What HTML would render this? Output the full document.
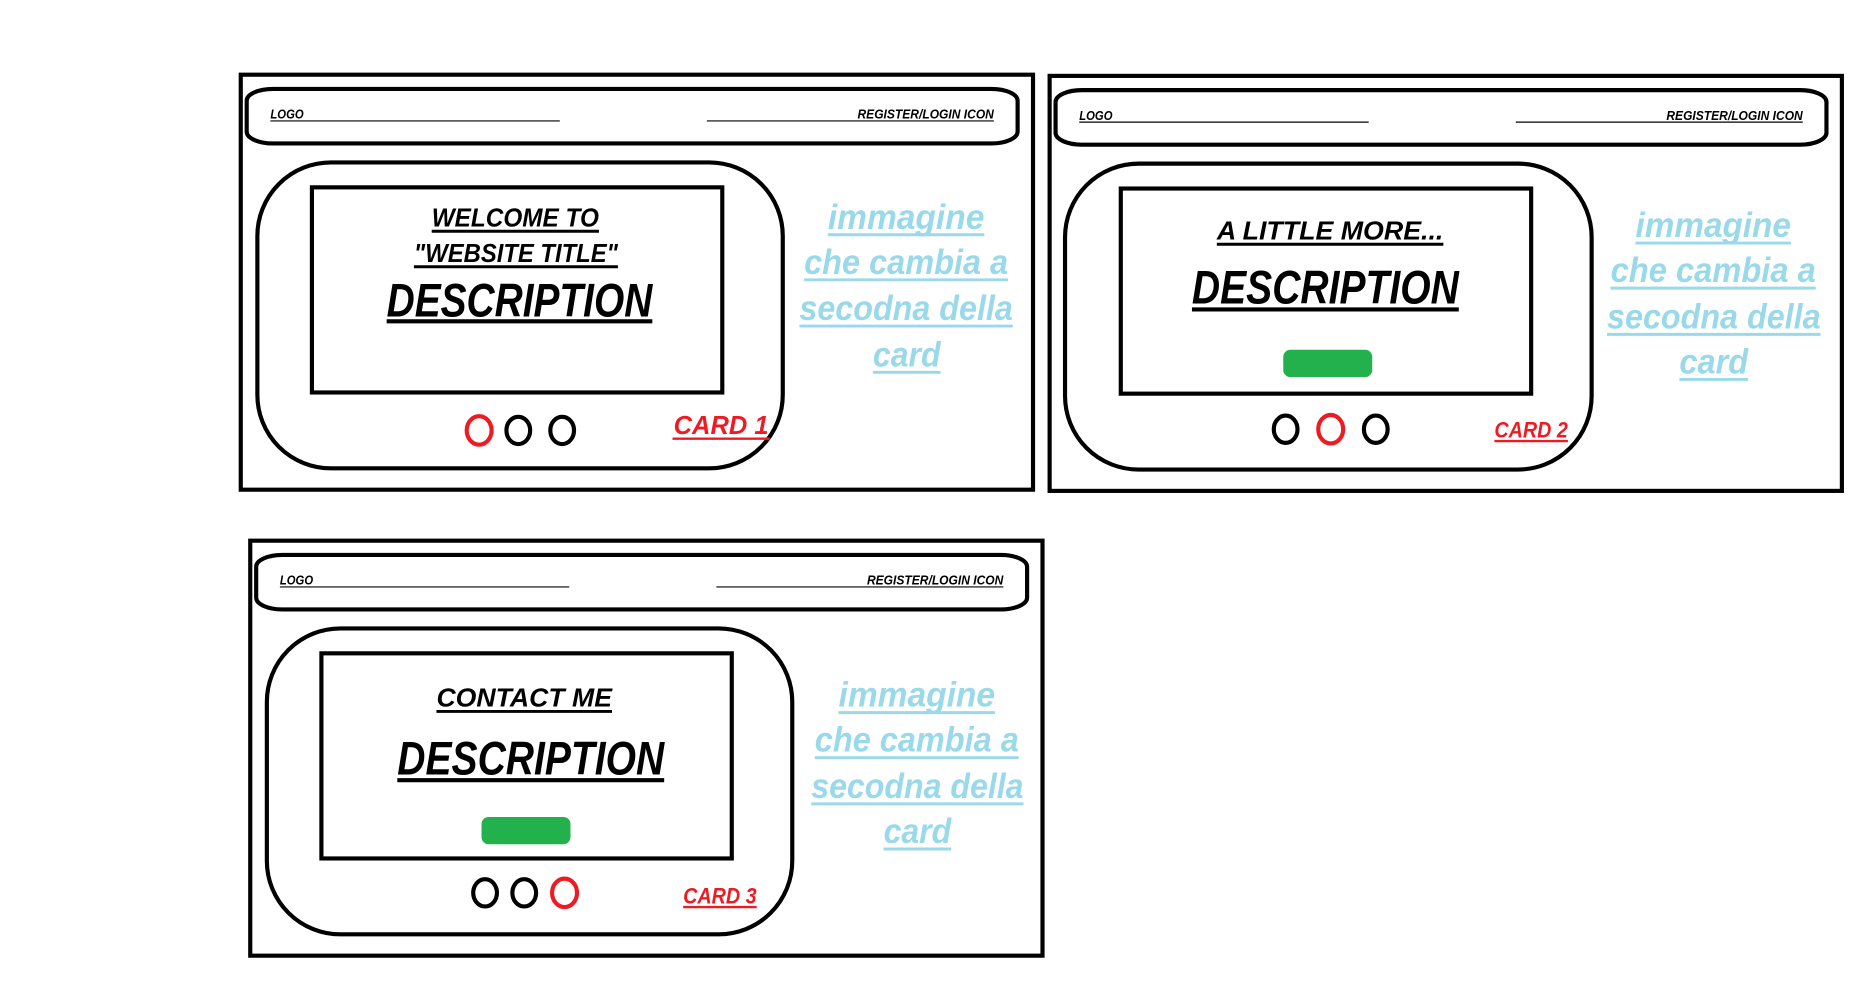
<!DOCTYPE html>
<html><head><meta charset="utf-8"><style>
html,body{margin:0;padding:0;background:#fff;width:1849px;height:996px;overflow:hidden}
svg{display:block}
text{font-family:"Liberation Sans",sans-serif;font-weight:bold;font-style:italic}
.k{fill:#000}.r{fill:#ed1c24}.b{fill:#99d9ea}
</style></head><body>
<svg width="1849" height="996" viewBox="0 0 1559 840" preserveAspectRatio="none" xmlns="http://www.w3.org/2000/svg">
<g fill="none" stroke="#000" stroke-width="3.5">
<!-- frame 1 -->
<rect x="203" y="63" width="668" height="350"/>
<rect x="208" y="75" width="650" height="46" rx="22" ry="10"/>
<rect x="217" y="137" width="443" height="258" rx="62"/>
<rect x="263" y="158" width="346" height="173"/>
<!-- frame 2 -->
<rect x="885" y="64" width="668" height="350"/>
<rect x="890" y="76" width="650" height="46" rx="22" ry="10"/>
<rect x="898" y="138" width="444" height="258" rx="62"/>
<rect x="945" y="159" width="346" height="173"/>
<!-- frame 3 -->
<rect x="211" y="456" width="668" height="350"/>
<rect x="216" y="468" width="650" height="46" rx="22" ry="10"/>
<rect x="225" y="530" width="443" height="258" rx="62"/>
<rect x="271" y="551" width="346" height="173"/>
</g>
<!-- thin header lines -->
<g stroke="#000" stroke-width="1">
<line x1="228" y1="102" x2="472" y2="102"/><line x1="596" y1="102" x2="838" y2="102"/>
<line x1="910" y1="103" x2="1154" y2="103"/><line x1="1278" y1="103" x2="1520" y2="103"/>
<line x1="236" y1="495" x2="480" y2="495"/><line x1="604" y1="495" x2="846" y2="495"/>
</g>
<g font-size="11" class="k">
<text x="228" y="100" textLength="28" lengthAdjust="spacingAndGlyphs" class="k">LOGO</text>
<text x="723" y="100" textLength="115" lengthAdjust="spacingAndGlyphs" class="k">REGISTER/LOGIN ICON</text>
<text x="910" y="101" textLength="28" lengthAdjust="spacingAndGlyphs" class="k">LOGO</text>
<text x="1405" y="101" textLength="115" lengthAdjust="spacingAndGlyphs" class="k">REGISTER/LOGIN ICON</text>
<text x="236" y="493" textLength="28" lengthAdjust="spacingAndGlyphs" class="k">LOGO</text>
<text x="731" y="493" textLength="115" lengthAdjust="spacingAndGlyphs" class="k">REGISTER/LOGIN ICON</text>
</g>
<!-- black titles -->
<text x="364" y="191" font-size="22" textLength="141" lengthAdjust="spacingAndGlyphs" class="k">WELCOME TO</text>
<text x="349" y="221" font-size="22" textLength="172" lengthAdjust="spacingAndGlyphs" class="k">"WEBSITE TITLE"</text>
<text x="326" y="267" font-size="40" textLength="224" lengthAdjust="spacingAndGlyphs" class="k">DESCRIPTION</text>
<text x="1026" y="202" font-size="22" textLength="191" lengthAdjust="spacingAndGlyphs" class="k">A LITTLE MORE...</text>
<text x="1005" y="256" font-size="40" textLength="225" lengthAdjust="spacingAndGlyphs" class="k">DESCRIPTION</text>
<text x="368" y="596" font-size="22" textLength="148" lengthAdjust="spacingAndGlyphs" class="k">CONTACT ME</text>
<text x="335" y="653" font-size="40" textLength="225" lengthAdjust="spacingAndGlyphs" class="k">DESCRIPTION</text>
<g stroke="#000">
<line x1="364" y1="195" x2="505" y2="195" stroke-width="2.5"/>
<line x1="349" y1="225" x2="521" y2="225" stroke-width="2.5"/>
<line x1="326" y1="271" x2="550" y2="271" stroke-width="3.5"/>
<line x1="1026" y1="206" x2="1217" y2="206" stroke-width="2.5"/>
<line x1="1005" y1="261" x2="1230" y2="261" stroke-width="3.5"/>
<line x1="368" y1="600" x2="516" y2="600" stroke-width="2.5"/>
<line x1="335" y1="658" x2="560" y2="658" stroke-width="3.5"/>
</g>
<!-- green buttons -->
<rect x="1082" y="295" width="75" height="23" rx="6" fill="#22b14c"/>
<rect x="406" y="689" width="75" height="23" rx="6" fill="#22b14c"/>
<!-- dots -->
<g fill="none" stroke-width="3.5">
<ellipse cx="404" cy="363" rx="10.5" ry="12" stroke="#ed1c24"/>
<ellipse cx="437" cy="363" rx="10" ry="11.5" stroke="#000"/>
<ellipse cx="474" cy="363" rx="10" ry="11.5" stroke="#000"/>
<ellipse cx="1084" cy="362" rx="10" ry="11.5" stroke="#000"/>
<ellipse cx="1122" cy="362" rx="10.5" ry="12" stroke="#ed1c24"/>
<ellipse cx="1160" cy="362" rx="10" ry="11.5" stroke="#000"/>
<ellipse cx="409" cy="753" rx="10" ry="11.5" stroke="#000"/>
<ellipse cx="442" cy="753" rx="10" ry="11.5" stroke="#000"/>
<ellipse cx="476" cy="753" rx="10.5" ry="12" stroke="#ed1c24"/>
</g>
<!-- card labels -->
<text x="568" y="366" font-size="22" textLength="80" lengthAdjust="spacingAndGlyphs" class="r">CARD  1</text>
<text x="1260" y="369" font-size="19" textLength="62" lengthAdjust="spacingAndGlyphs" class="r">CARD 2</text>
<text x="576" y="762" font-size="19" textLength="62" lengthAdjust="spacingAndGlyphs" class="r">CARD 3</text>
<g stroke="#ed1c24" stroke-width="2">
<line x1="567" y1="370" x2="649" y2="370"/>
<line x1="1260" y1="372" x2="1322" y2="372"/>
<line x1="576" y1="765" x2="638" y2="765"/>
</g>
<!-- blue text -->
<g font-size="30" class="b">
<text x="698" y="193" textLength="132" lengthAdjust="spacingAndGlyphs" class="b">immagine</text>
<text x="678" y="231" textLength="172" lengthAdjust="spacingAndGlyphs" class="b">che cambia a</text>
<text x="674" y="270" textLength="180" lengthAdjust="spacingAndGlyphs" class="b">secodna della</text>
<text x="736" y="309" textLength="57" lengthAdjust="spacingAndGlyphs" class="b">card</text>
<text x="1379" y="200" textLength="131" lengthAdjust="spacingAndGlyphs" class="b">immagine</text>
<text x="1358" y="238" textLength="173" lengthAdjust="spacingAndGlyphs" class="b">che cambia a</text>
<text x="1355" y="277" textLength="180" lengthAdjust="spacingAndGlyphs" class="b">secodna della</text>
<text x="1416" y="315" textLength="58" lengthAdjust="spacingAndGlyphs" class="b">card</text>
<text x="707" y="596" textLength="132" lengthAdjust="spacingAndGlyphs" class="b">immagine</text>
<text x="687" y="634" textLength="172" lengthAdjust="spacingAndGlyphs" class="b">che cambia a</text>
<text x="684" y="673" textLength="179" lengthAdjust="spacingAndGlyphs" class="b">secodna della</text>
<text x="745" y="711" textLength="57" lengthAdjust="spacingAndGlyphs" class="b">card</text>
</g>
<g stroke="#99d9ea" stroke-width="2.5">
<line x1="698" y1="198" x2="830" y2="198"/><line x1="678" y1="236" x2="850" y2="236"/>
<line x1="674" y1="275" x2="854" y2="275"/><line x1="736" y1="314" x2="793" y2="314"/>
<line x1="1379" y1="205" x2="1510" y2="205"/><line x1="1358" y1="243" x2="1531" y2="243"/>
<line x1="1355" y1="282" x2="1535" y2="282"/><line x1="1416" y1="320" x2="1474" y2="320"/>
<line x1="707" y1="601" x2="839" y2="601"/><line x1="687" y1="639" x2="859" y2="639"/>
<line x1="684" y1="678" x2="863" y2="678"/><line x1="745" y1="716" x2="802" y2="716"/>
</g>
</svg>
</body></html>
